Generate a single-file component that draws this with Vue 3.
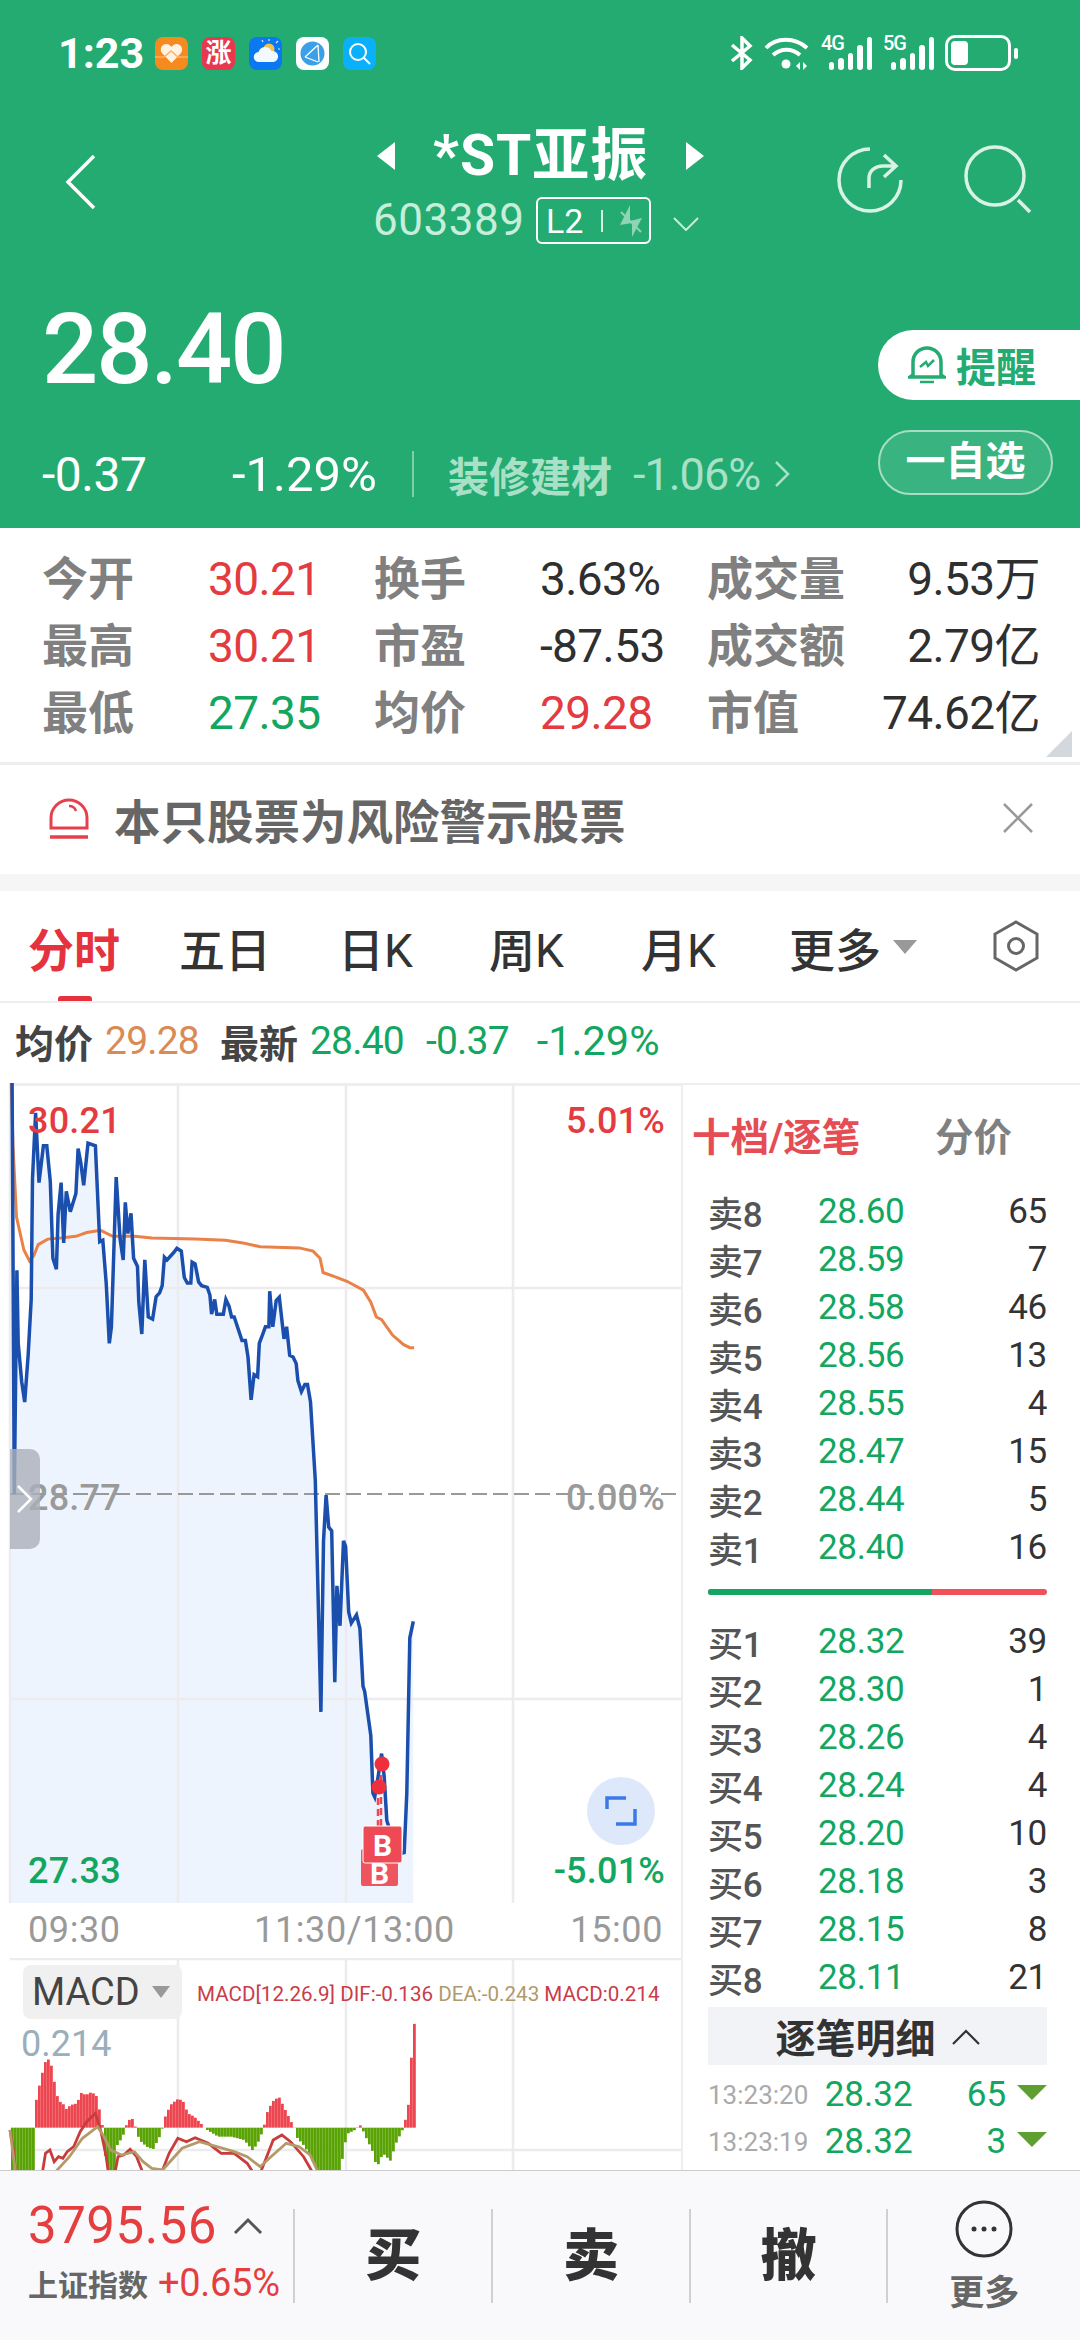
<script setup>
// chart data is read off the picture, so the raw numbers are in zoomed coordinates
const px = (x) => x / 2.306
const py = (y) => y / 1.823 - 3
const my = (y) => y / 3 - 18

const toLine = (raw, fy) => {
  const out = []
  for (let i = 0; i < raw.length; i += 2) out.push(`${px(raw[i]).toFixed(1)},${fy(raw[i + 1]).toFixed(1)}`)
  return out.join(' ')
}

const blueRaw = [28,5,33,755,39,347,42,480,50,550,57,587,65,500,72,400,75,180,82,60,90,187,100,120,108,120,116,185,122,325,130,345,134,245,141,187,147,297,153,203,162,240,175,207,180,125,186,150,193,192,203,115,220,120,230,295,237,292,245,370,252,480,257,450,268,177,277,290,284,328,289,223,295,280,302,243,308,325,317,340,320,405,327,463,334,328,342,432,352,436,360,395,368,388,374,375,379,323,385,328,400,315,408,307,418,312,425,360,432,370,440,370,443,332,450,335,458,368,465,375,478,378,484,392,488,427,495,400,500,427,515,427,521,400,528,412,534,432,540,432,558,475,566,475,572,505,579,583,586,537,594,541,598,480,605,465,612,450,620,450,622,385,629,450,637,402,644,396,655,472,661,450,668,502,676,505,683,517,687,548,695,568,703,555,709,555,716,587,727,730,740,1152,746,840,752,757,758,815,765,822,772,1098,777,922,784,995,792,840,797,850,804,970,810,990,822,975,830,1000,837,1105,841,1115,855,1195,860,1300,864,1307,870,1280,880,1228,886,1270,892,1350,900,1370,925,1410,932,1408,938,1300,945,1017,953,987]
const orangeRaw = [26,5,30,120,38,250,55,310,68,330,78,320,88,300,110,290,140,288,175,285,200,278,232,274,260,285,310,285,350,288,450,290,520,292,560,297,600,304,690,306,722,312,738,325,745,351,770,358,800,367,838,383,855,405,868,432,880,437,905,465,930,482,945,488,955,488]
const difRaw = [23,570,30,620,38,720,95,720,105,640,115,630,125,665,135,650,145,655,155,635,170,620,185,575,200,545,220,520,232,570,245,650,252,720,265,700,272,650,285,645,300,628,315,650,330,700,372,700,390,640,410,595,430,605,450,593,480,610,510,640,540,640,570,670,585,700,600,700,615,650,630,600,650,585,670,605,700,650,722,700]
const deaRaw = [23,570,38,720,125,700,160,650,190,595,225,560,240,590,255,630,280,645,310,635,330,665,350,685,375,690,420,625,460,605,500,620,540,635,570,650,600,680,625,650,660,610,690,620,715,645,735,700]
const histRaw = [23,760,78,760,79,490,92,410,105,350,115,375,125,445,133,490,140,480,147,510,160,495,175,490,183,458,195,465,205,458,218,462,228,520,234,563,240,650,250,720,260,720,265,620,280,590,286,563,290,550,300,530,310,563,318,600,335,620,350,628,365,590,372,563,378,530,390,495,405,478,418,480,430,520,445,530,460,550,468,563,475,570,500,590,530,590,560,600,580,632,595,600,605,563,612,520,625,485,640,470,655,510,672,555,676,563,680,590,700,620,725,680,740,720,780,720,790,620,800,580,815,570,822,563,825,550,831,563,840,590,855,630,866,683,880,640,897,662,910,610,925,570,930,550,940,485,946,340,953,243]

const bluePts = toLine(blueRaw, py)
const orangePts = toLine(orangeRaw, py)
const areaPts = `${bluePts} ${px(953).toFixed(1)},820 10,820 10,0`
const difPts = toLine(difRaw, my)
const deaPts = toLine(deaRaw, my)

const histTop = (x) => {
  for (let i = 0; i < histRaw.length - 2; i += 2) {
    if (x >= histRaw[i] && x <= histRaw[i + 2]) {
      const t = (x - histRaw[i]) / (histRaw[i + 2] - histRaw[i])
      return histRaw[i + 1] + (histRaw[i + 3] - histRaw[i + 1]) * t
    }
  }
  return 563
}
const bars = []
for (let x = 11; x < 414; x += 3) {
  const top = histTop(x * 2.306)
  const zero = my(563)
  const y = my(top)
  bars.push({ x, y: Math.min(y, zero), h: Math.abs(y - zero), up: top < 563 })
}

const stats = [
  ['今开', '30.21', 'red', '换手', '3.63%', '', '成交量', '9.53万'],
  ['最高', '30.21', 'red', '市盈', '-87.53', '', '成交额', '2.79亿'],
  ['最低', '27.35', 'green', '均价', '29.28', 'red', '市值', '74.62亿'],
]
const tabs = [['五日', ''], ['日', 'K'], ['周', 'K'], ['月', 'K']]
const signal = [8, 12, 17, 25, 33]
const sells = [['卖8','28.60','65'],['卖7','28.59','7'],['卖6','28.58','46'],['卖5','28.56','13'],['卖4','28.55','4'],['卖3','28.47','15'],['卖2','28.44','5'],['卖1','28.40','16']]
const buys = [['买1','28.32','39'],['买2','28.30','1'],['买3','28.26','4'],['买4','28.24','4'],['买5','28.20','10'],['买6','28.18','3'],['买7','28.15','8'],['买8','28.11','21']]
const ticks = [['13:23:20','28.32','65'],['13:23:19','28.32','3']]
</script>

<template>
  <div class="page">
    <header class="head">
      <div class="status">
        <span class="clock">1:23</span>
        <div class="apps">
          <svg class="app" viewBox="0 0 33 33"><rect width="33" height="33" rx="8" fill="#f58a1f"/><path d="M16.500 26 7 16c-3-4 0-9 4.500-9 2.500 0 4 1.500 5 3 1-1.500 2.500-3 5-3C26 7 29 12 26 16z" fill="#fff2e2"/><path d="M0 20h9l7-6 7 6h10" fill="none" stroke="#f9b36b" stroke-width="1.500"/></svg>
          <span class="app app-up">涨</span>
          <svg class="app" viewBox="0 0 33 33"><rect width="33" height="33" rx="8" fill="#0a78f0"/><circle cx="20" cy="12" r="5.500" fill="#f7c04a"/><path d="M20 4v-2M27 6l2-2M14 5l-1-2M29 12h2" stroke="#dcecff" stroke-width="1.200"/><path d="M10 25a5 5 0 0 1-.500-10 7 7 0 0 1 13-1 5.500 5.500 0 0 1 2 11z" fill="#f4f8ff"/></svg>
          <svg class="app" viewBox="0 0 33 33"><rect width="33" height="33" rx="8" fill="#fff"/><circle cx="16.500" cy="16.500" r="12" fill="#3aa0e8"/><path d="M9 20 22 8M9 20l13 5M22 8l1 17" stroke="#fff" stroke-width="1.300" fill="none"/></svg>
          <svg class="app" viewBox="0 0 33 33"><rect width="33" height="33" rx="8" fill="#0bb0fb"/><circle cx="15" cy="15" r="8" fill="none" stroke="#fff" stroke-width="2"/><path d="m21 21 6 6" stroke="#fff" stroke-width="2"/></svg>
        </div>
        <div class="sys">
          <svg width="24" height="34" viewBox="0 0 24 34" fill="none" stroke="#fff" stroke-width="3.500"><path d="M3 9 21 24l-8 8V2l8 8L3 25"/></svg>
          <svg width="46" height="34" viewBox="0 0 46 34" fill="none" stroke="#fff" stroke-width="4"><path d="M2 12C12 1 31 1 43 12M9 19c8-7 19-7 27 0"/><circle cx="22" cy="28" r="4.500" fill="#fff" stroke="none"/><path d="M32 30l4-4v8zM39 26l4 4-4 4z" fill="#fff" stroke="none"/></svg>
          <span class="net"><b>4G</b><i v-for="h in signal" :key="h" :style="{ height: h + 'px' }"></i></span>
          <span class="net"><b>5G</b><i v-for="h in signal" :key="h" :style="{ height: h + 'px' }"></i></span>
          <span class="batt"><i></i></span><span class="nub"></span>
        </div>
      </div>

      <div class="nav">
        <svg class="back" width="34" height="56" viewBox="0 0 34 56" fill="none" stroke="#fff" stroke-width="3.500"><path d="M30 2 4 28l26 26"/></svg>
        <div class="mid">
          <div class="title">
            <svg width="22" height="30" viewBox="0 0 22 30" fill="#fff"><path d="M20 1v28L2 15z"/></svg>
            <span>*ST亚振</span>
            <svg width="22" height="30" viewBox="0 0 22 30" fill="#fff"><path d="M2 1v28l18-14z"/></svg>
          </div>
          <div class="code">
            <span class="num">603389</span>
            <span class="badge">L2<i></i>
              <svg width="26" height="36" viewBox="0 0 26 36" fill="#8fd4b4"><path d="M12 2v16l12-3-10 19V20L2 22z"/><path d="M3 9l20 20" stroke="#8fd4b4" stroke-width="2"/></svg>
            </span>
            <svg width="26" height="14" viewBox="0 0 26 14" fill="none" stroke="#c6eedb" stroke-width="2"><path d="m1 1 12 12L25 1"/></svg>
          </div>
        </div>
        <svg class="tool" width="70" height="70" viewBox="0 0 70 70" fill="none" stroke="#d9f2e6" stroke-width="3.500"><path d="M34 5a31 31 0 1 0 31 31"/><path d="M33 44V34c0-7 6-12 14-12h12M48 11l12 11-12 11"/></svg>
        <svg class="tool tool-b" width="70" height="70" viewBox="0 0 70 70" fill="none" stroke="#d9f2e6" stroke-width="3.500"><circle cx="33" cy="32" r="29"/><path d="m56 56 12 12"/></svg>
      </div>

      <div class="quote">
        <div class="left">
          <div class="price">28.40</div>
          <div class="change">
            <span class="chg-a">-0.37</span>
            <span class="chg-b">-1.29%</span>
            <i class="rule"></i>
            <span class="sector">装修建材</span>
            <span class="sector-pct">-1.06%</span>
            <svg width="16" height="28" viewBox="0 0 16 28" fill="none" stroke="#a8e0c8" stroke-width="2.500"><path d="m2 2 12 12L2 26"/></svg>
          </div>
        </div>
        <div class="right">
          <div class="alarm">
            <svg width="38" height="40" viewBox="0 0 38 40" fill="none" stroke="#23ab71" stroke-width="3.500"><path d="M5 30V17a14 14 0 0 1 28 0v13l3 2H2z"/><path d="M12 37h14M12 22l6-5 2 4 6-6" stroke-width="2.500"/></svg>
            <span>提醒</span>
          </div>
          <div class="fav">一自选</div>
        </div>
      </div>
    </header>

    <section class="stats">
      <div v-for="row in stats" :key="row[0]" class="stat-row">
        <span class="lab">{{ row[0] }}</span>
        <span class="val" :class="row[2]">{{ row[1] }}</span>
        <span class="lab">{{ row[3] }}</span>
        <span class="val" :class="row[5]">{{ row[4] }}</span>
        <span class="lab">{{ row[6] }}</span>
        <span class="val end">{{ row[7] }}</span>
      </div>
      <svg class="corner" width="26" height="26" viewBox="0 0 26 26"><path d="M26 0v26H0z" fill="#d3d8dd"/></svg>
    </section>

    <section class="warn">
      <svg width="42" height="42" viewBox="0 0 42 42" fill="none" stroke="#e5404c" stroke-width="3"><path d="M3 31V21a18 18 0 0 1 36 0v10z"/><path d="M2 40h38" stroke-width="3.500"/><path d="M21 9c3 0 6 2 7 5" stroke-width="2.500"/></svg>
      <span class="warn-text">本只股票为风险警示股票</span>
      <svg class="warn-x" width="32" height="32" viewBox="0 0 32 32" fill="none" stroke="#999" stroke-width="2.500"><path d="m2 2 28 28M30 2 2 30"/></svg>
    </section>

    <nav class="tabs">
      <span class="tab on">分时</span>
      <span v-for="t in tabs" :key="t[0]" class="tab">{{ t[0] }}<em>{{ t[1] }}</em></span>
      <span class="tab tab-more">更多
        <svg width="24" height="14" viewBox="0 0 24 14"><path d="M0 0h24L12 14z" fill="#999"/></svg>
      </span>
      <svg class="hex" width="48" height="52" viewBox="0 0 48 52" fill="none" stroke="#666" stroke-width="3"><path d="M24 2 45 14v24L24 50 3 38V14z"/><circle cx="24" cy="26" r="7.500"/></svg>
    </nav>

    <div class="info">
      <span class="k">均价</span><span class="orange v1">29.28</span>
      <span class="k k2">最新</span><span class="green v1">28.40</span>
      <span class="green v2">-0.37</span><span class="green v3">-1.29%</span>
    </div>

    <div class="main">
      <div class="charts">
        <div class="canvas">
          <svg width="681" height="820" viewBox="0 0 681 820">
            <polygon :points="areaPts" fill="#eef4fd"/>
            <g stroke="#ececee" stroke-width="2.500">
              <path d="M10 1.500H681M10 205H681M10 616H681"/>
              <path d="M10 0V820M178 0V820M346 0V820M513 0V820"/>
            </g>
            <path d="M10 411H681" stroke="#999" stroke-width="2" stroke-dasharray="15 6"/>
            <polyline :points="orangePts" fill="none" stroke="#ea8146" stroke-width="3"/>
            <polyline :points="bluePts" fill="none" stroke="#1a4fae" stroke-width="3.500"/>
            <path d="M381 681V745M378 704V745" stroke="#ef4650" stroke-width="2.500" stroke-dasharray="7 4"/>
            <circle cx="382" cy="681" r="7.500" fill="#ef2f3c"/>
            <circle cx="379" cy="704" r="7.500" fill="#ef2f3c"/>
            <path d="M361 768a2 2 0 0 1 2-2h33a2 2 0 0 1 2 2v33a2 2 0 0 1-2 2h-33a2 2 0 0 1-2-2z" fill="#ee5560"/>
            <rect x="363" y="743" width="39" height="37" rx="2" fill="#ee4a55" stroke="#fff" stroke-width="1"/>
            <text x="382.500" y="773" class="mark">B</text>
          </svg>
          <span class="lb red tl">30.21</span>
          <span class="lb red tr">5.01%</span>
          <span class="lb gray ml">28.77</span>
          <span class="lb gray mr">0.00%</span>
          <span class="lb green bl">27.33</span>
          <span class="lb green br">-5.01%</span>
          <span class="under-b">B</span>
          <span class="handle">
            <svg width="18" height="30" viewBox="0 0 18 30" fill="none" stroke="#fff" stroke-width="2.500"><path d="m2 2 13 13L2 28"/></svg>
          </span>
          <span class="full">
            <svg width="32" height="32" viewBox="0 0 32 32" fill="none" stroke="#3d78e8" stroke-width="3.500"><path d="M2 14V3h19M30 14v15H11"/></svg>
          </span>
        </div>
        <div class="times"><span>09:30</span><span class="times-mid">11:30/13:00</span><span>15:00</span></div>
        <div class="macd">
          <svg width="681" height="212" viewBox="0 0 681 212">
            <g stroke="#ececee" stroke-width="2.500">
              <path d="M10 1H681M10 192H681"/>
              <path d="M178 0V212M346 0V212M513 0V212"/>
            </g>
            <rect v-for="b in bars" :key="b.x" :x="b.x" :y="b.y" width="2.800" :height="b.h" :fill="b.up ? '#ee4650' : '#5aa305'"/>
            <polyline :points="difPts" fill="none" stroke="#c93c3c" stroke-width="2.800"/>
            <polyline :points="deaPts" fill="none" stroke="#b39a68" stroke-width="2.800"/>
          </svg>
          <div class="macd-btn">MACD
            <svg width="18" height="12" viewBox="0 0 18 12"><path d="M0 0h18L9 12z" fill="#999"/></svg>
          </div>
          <div class="legend"><span>MACD[12.26.9] DIF:-0.136</span> <span class="tan">DEA:-0.243</span> <span>MACD:0.214</span></div>
          <span class="macd-max">0.214</span>
        </div>
      </div>

      <aside class="book">
        <div class="book-head"><span class="book-on">十档/逐笔</span><span class="book-off">分价</span></div>
        <div v-for="r in sells" :key="r[0]" class="lv">
          <span class="lv-k">{{ r[0] }}</span><span class="lv-p">{{ r[1] }}</span><span class="lv-v">{{ r[2] }}</span>
        </div>
        <div class="ratio"><i></i></div>
        <div v-for="r in buys" :key="r[0]" class="lv">
          <span class="lv-k">{{ r[0] }}</span><span class="lv-p">{{ r[1] }}</span><span class="lv-v">{{ r[2] }}</span>
        </div>
        <div class="detail">逐笔明细
          <svg width="28" height="16" viewBox="0 0 28 16" fill="none" stroke="#333" stroke-width="2.200"><path d="m1 15 13-13 13 13"/></svg>
        </div>
        <div class="ticks">
          <div v-for="t in ticks" :key="t[0]" class="tick">
            <span class="tick-t">{{ t[0] }}</span><span class="tick-p">{{ t[1] }}</span><span class="tick-v">{{ t[2] }}</span>
            <svg width="30" height="15" viewBox="0 0 30 15"><path d="M0 0h30L15 15z" fill="#5f9f32"/></svg>
          </div>
        </div>
      </aside>
    </div>

    <footer class="bar">
      <div class="index">
        <div class="index-top">
          <span class="index-num">3795.56</span>
          <svg width="30" height="18" viewBox="0 0 30 18" fill="none" stroke="#555" stroke-width="3"><path d="m2 16 13-13 13 13"/></svg>
        </div>
        <div class="index-sub"><span>上证指数</span><span class="index-pct">+0.65%</span></div>
      </div>
      <div class="act">买</div>
      <div class="act">卖</div>
      <div class="act">撤</div>
      <div class="more">
        <svg width="58" height="58" viewBox="0 0 58 58"><circle cx="29" cy="29" r="27" fill="none" stroke="#333" stroke-width="3"/><circle cx="19" cy="29" r="2.500" fill="#333"/><circle cx="29" cy="29" r="2.500" fill="#333"/><circle cx="39" cy="29" r="2.500" fill="#333"/></svg>
        <span>更多</span>
      </div>
    </footer>
  </div>
</template>

<style scoped>
.page {
  position: relative;
  width: 1080px;
  height: 2340px;
  overflow: hidden;
  background: #fff;
  font-family: Roboto, "Noto Sans CJK SC", sans-serif;
  color: #333;
}

/* green header */
.head {
  height: 528px;
  background: #23ab71;
  color: #fff;
}
.status {
  display: flex;
  align-items: center;
  height: 106px;
  padding: 0 62px 0 58px;
}
.clock { width: 97px; font-size: 43px; font-weight: 700; }
.apps { display: flex; gap: 14px; }
.app { display: block; width: 33px; height: 33px; }
.app-up {
  background: #e8384f;
  border-radius: 8px;
  color: #fff;
  font-size: 26px;
  line-height: 33px;
  font-weight: 700;
  text-align: center;
}
.sys { display: flex; align-items: center; margin-left: auto; gap: 11px; }
.net { position: relative; display: flex; align-items: flex-end; gap: 4px; height: 34px; width: 51px; justify-content: flex-end; }
.net b { position: absolute; left: 0; top: -3px; font-size: 20px; line-height: 20px; font-weight: 500; letter-spacing: -1px; }
.net i { display: block; width: 5.500px; background: #fff; border-radius: 3px; }
.batt { display: block; box-sizing: border-box; width: 66px; height: 36px; border: 3px solid #fff; border-radius: 10px; padding: 3px; }
.batt i { display: block; width: 17px; height: 24px; background: #fff; border-radius: 4px; }
.nub { display: block; width: 4px; height: 11px; margin-left: -8px; background: #fff; border-radius: 2px; }

.nav { display: flex; align-items: flex-start; height: 155px; padding-left: 64px; }
.back { margin-top: 48px; }
.mid { width: 463px; margin-left: 275px; padding-top: 12px; }
.title { display: flex; align-items: center; height: 76px; gap: 36px; padding-left: 2px; font-size: 57px; font-weight: 700; line-height: 76px; }
.title span { letter-spacing: 1px; }
.code { display: flex; align-items: center; height: 49px; margin-top: 2px; color: #c6eedb; }
.code .num { width: 163px; font-size: 44px; letter-spacing: 0.5px; line-height: 49px; }
.badge { display: flex; align-items: center; box-sizing: border-box; width: 115px; height: 47px; padding-left: 8px; border: 2px solid #fff; border-radius: 6px; color: #fff; font-size: 34px; }
.badge i { width: 2px; height: 22px; margin: 0 15px 0 18px; background: #d9f2e6; }
.code > svg { margin-left: 22px; margin-top: 6px; }
.tool { margin-top: 38px; }
.tool-b { margin-left: 56px; }

.quote { display: flex; justify-content: space-between; }
.left { padding-left: 42px; padding-top: 38px; }
.price { height: 100px; font-size: 99px; font-weight: 500; line-height: 100px; letter-spacing: -2px; }
.change { display: flex; align-items: center; height: 60px; margin-top: 45px; font-size: 48px; }
.chg-a { width: 190px; letter-spacing: -0.5px; }
.chg-b { width: 180px; letter-spacing: 0; font-size: 49px; }
.rule { width: 2px; height: 46px; margin-right: 34px; background: #7fcfaa; }
.sector { width: 185px; color: #a8e0c8; font-size: 41px; font-weight: 700; }
.sector-pct { width: 141px; color: #a8e0c8; font-size: 45px; letter-spacing: -1px; }
.right { display: flex; flex-direction: column; align-items: flex-end; padding-top: 69px; }
.alarm { display: flex; align-items: center; box-sizing: border-box; width: 202px; height: 70px; padding-left: 30px; gap: 10px; background: #fff; border-radius: 35px 0 0 35px; color: #23ab71; font-size: 40px; font-weight: 700; }
.fav { box-sizing: border-box; width: 175px; height: 65px; margin: 30px 27px 0 0; border: 2px solid #a8dcc4; border-radius: 33px; background: rgba(255, 255, 255, 0.1); font-size: 40px; font-weight: 700; line-height: 59px; text-align: center; }

/* stat grid */
.stats { position: relative; box-sizing: border-box; height: 237px; padding: 18px 40px 0 42px; border-bottom: 3px solid #eee; }
.stat-row { display: grid; grid-template-columns: 166px 166px 166px 167px 150px 1fr; height: 67px; align-items: center; line-height: 67px; }
.lab { color: #808080; font-size: 46px; font-weight: 700; white-space: nowrap; }
.val { color: #2f2f2f; font-size: 46px; letter-spacing: -0.6px; white-space: nowrap; }
.val.end { text-align: right; }
.corner { position: absolute; right: 8px; bottom: 5px; }
.red { color: #e33b3f; }
.green { color: #12a660; }
.orange { color: #d98a55; }
.gray { color: #9a9a9a; }

.warn { display: flex; align-items: center; height: 106px; padding: 0 46px 3px 48px; border-bottom: 17px solid #f6f6f6; }
.warn-text { margin-left: 24px; color: #666; font-size: 46.500px; font-weight: 700; }
.warn-x { margin-left: auto; }

.tabs { position: relative; display: grid; grid-template-columns: 151px 159px 151px 152px 148px auto; align-items: center; box-sizing: border-box; height: 112px; padding: 1px 0 0 28px; border-bottom: 2px solid #eee; font-size: 46px; font-weight: 500; }
.tab { white-space: nowrap; }
.tab em { font-style: normal; font-weight: 400; }
.tab.on { color: #e5323f; font-weight: 700; }
.tab.on::after { content: ""; position: absolute; left: 58px; bottom: 0; width: 34px; height: 5px; background: #e5323f; border-radius: 3px 3px 0 0; }
.tab-more { display: inline-flex; align-items: center; gap: 12px; }
.hex { position: absolute; right: 40px; top: 29px; }

.info { display: flex; align-items: center; box-sizing: border-box; height: 80px; padding: 0 0 5px 15px; font-size: 39px; }
.k { color: #444; font-weight: 700; }
.k2 { margin-left: 21px; }
.v1 { margin-left: 12px; letter-spacing: -0.8px; }
.v2 { margin-left: 22px; letter-spacing: -0.8px; }
.v3 { margin-left: 28px; font-size: 41.500px; letter-spacing: 0; }

/* main body: charts + order book */
.main { display: flex; }
.charts { width: 681px; }
.canvas { position: relative; height: 820px; }
.canvas svg { display: block; }
.mark { fill: #fff; font-size: 30px; font-weight: 700; text-anchor: middle; font-family: Roboto, sans-serif; }
.under-b { position: absolute; left: 361px; top: 780px; width: 37px; height: 23px; overflow: hidden; color: #fff; font-size: 30px; font-weight: 700; line-height: 22px; text-align: center; }
.lb { position: absolute; font-size: 36px; line-height: 40px; letter-spacing: 0.2px; font-weight: 500; }
.tl { left: 28px; top: 18px; }
.tr { right: 16px; top: 18px; }
.ml { left: 28px; top: 395px; }
.mr { right: 16px; top: 395px; }
.bl { left: 28px; top: 768px; }
.br { right: 16px; top: 768px; }
.handle { position: absolute; left: 10px; top: 366px; display: flex; align-items: center; width: 30px; height: 100px; padding-left: 6px; box-sizing: border-box; background: rgba(170, 175, 185, 0.8); border-radius: 0 10px 10px 0; }
.full { position: absolute; left: 587px; top: 694px; display: flex; align-items: center; justify-content: center; width: 68px; height: 68px; background: #dde8fb; border-radius: 50%; }

.times { display: flex; justify-content: space-between; box-sizing: border-box; height: 55px; padding: 0 18px 0 28px; color: #999; font-size: 36px; letter-spacing: 0.6px; line-height: 55px; }
.times-mid { margin-left: 18px; }
.macd { position: relative; height: 212px; overflow: hidden; }
.macd svg { display: block; }
.macd-btn { position: absolute; left: 23px; top: 7px; display: flex; align-items: center; gap: 12px; box-sizing: border-box; width: 159px; height: 54px; padding-left: 9px; background: #f0f0f0; border-radius: 8px; color: #444; font-size: 38px; }
.legend { position: absolute; left: 197px; top: 24px; color: #c93c4a; font-size: 20.600px; line-height: 24px; white-space: nowrap; }
.tan { color: #b09a6a; }
.macd-max { position: absolute; left: 21px; top: 65px; color: #9aaebc; font-size: 36px; line-height: 42px; }

.book { box-sizing: border-box; width: 399px; height: 1087px; padding: 0 33px 0 25px; border-left: 2px solid #eee; border-top: 2.500px solid #eee; }
.book-head { display: flex; align-items: center; height: 102px; margin-left: -16px; font-size: 38.500px; font-weight: 700; padding-bottom: 5px; box-sizing: border-box; }
.book-on { width: 243px; color: #e64c54; }
.book-off { color: #808080; }
.lv { display: flex; align-items: center; height: 48px; font-size: 35px; letter-spacing: -0.3px; }
.lv-k { width: 110px; color: #555; font-weight: 500; }
.lv-p { width: 120px; color: #12a660; }
.lv-v { flex: 1; color: #333; text-align: right; }
.ratio { height: 6px; margin: 18px 0 22px; background: #f05057; border-radius: 3px; overflow: hidden; }
.ratio i { display: block; width: 224px; height: 6px; background: #12a660; }
.detail { display: flex; align-items: center; justify-content: center; gap: 16px; height: 58px; margin-top: 6px; background: #f2f3f7; color: #333; font-size: 40px; font-weight: 700; }
.detail svg { margin-top: 2px; }
.ticks { padding-top: 6px; }
.tick { display: flex; align-items: center; height: 47px; }
.tick-t { width: 117px; color: #aaa; font-size: 26px; }
.tick-p { width: 120px; color: #12a660; font-size: 35px; }
.tick-v { width: 62px; color: #12a660; font-size: 35px; text-align: right; }
.tick svg { margin-left: 11px; margin-top: -5px; }

/* bottom bar */
.bar { position: absolute; left: 0; right: 0; top: 2170px; bottom: 0; display: flex; box-sizing: border-box; border-top: 1.500px solid #ccc; background: #f9f9fc; padding-top: 38px; }
.index { box-sizing: border-box; width: 294px; height: 94px; padding-left: 28px; }
.index-top { display: flex; align-items: center; gap: 16px; height: 50px; margin-top: -8px; }
.index-num { color: #e53e3e; font-size: 51px; letter-spacing: 0.5px; line-height: 50px; }
.index-sub { display: flex; align-items: center; gap: 10px; height: 40px; margin-top: 12px; color: #666; font-size: 30px; font-weight: 700; }
.index-pct { color: #e53e3e; font-size: 38px; font-weight: 400; letter-spacing: -0.3px; }
.act { width: 196px; height: 94px; border-left: 2px solid #d0d0d0; color: #333; font-size: 56px; font-weight: 900; line-height: 94px; text-align: center; }
.more { display: flex; flex-direction: column; align-items: center; box-sizing: border-box; width: 194px; height: 94px; border-left: 2px solid #d0d0d0; color: #666; font-size: 35px; font-weight: 700; }
.more svg { margin-top: -9px; flex: none; }
.more span { margin-top: 16px; line-height: 40px; }
</style>

<style>
html, body { margin: 0; background: #fff; }
</style>
